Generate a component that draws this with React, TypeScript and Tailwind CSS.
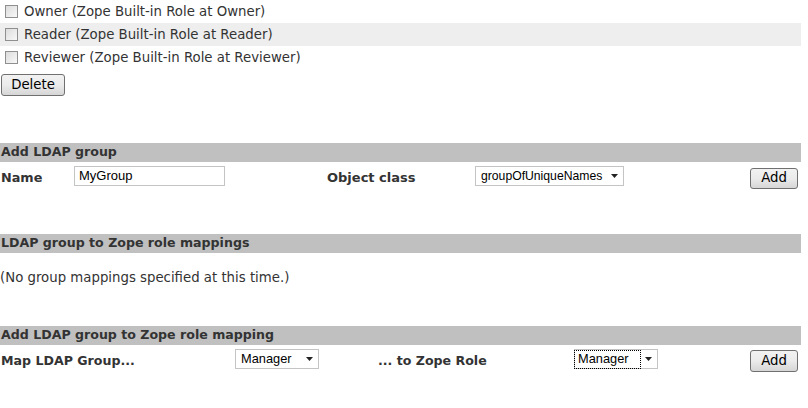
import React from "react";

const verdana = { fontFamily: '"DejaVu Sans", Verdana, sans-serif' };
const arial = { fontFamily: '"Liberation Sans", Arial, sans-serif' };

function Checkbox() {
  return (
    <span className="inline-block w-[13px] h-[13px] border border-[#8f8f8f] bg-gradient-to-br from-[#dcdcdc] to-[#f8f8f8] shrink-0" />
  );
}

function Btn({ label, className = "" }: { label: string; className?: string }) {
  return (
    <div
      className={
        "flex items-center justify-center border border-[#707070] rounded-[3px] bg-gradient-to-b from-[#f2f2f2] via-[#ebebeb] to-[#d6d6d6] text-[13.3px] text-black " +
        className
      }
      style={verdana}
    >
      {label}
    </div>
  );
}

function Select({ value, className = "", focused = false }: { value: string; className?: string; focused?: boolean }) {
  return (
    <div
      className={"flex items-center h-[20px] border border-[#c4c4c4] bg-white text-black " + className}
      style={arial}
    >
      <span
        className={
          "flex-1 min-w-0 whitespace-nowrap overflow-hidden leading-[16px] " +
          (focused ? "outline outline-1 outline-dotted outline-black mr-[5px] pl-[3px] h-[17px]" : "pl-[5px]")
        }
      >
        {value}
      </span>
      <svg width="7" height="4" viewBox="0 0 7 4" className="mr-[5px] shrink-0">
        <path d="M0 0 H7 L3.5 4 Z" fill="#222" />
      </svg>
    </div>
  );
}

function Header({ children }: { children: React.ReactNode }) {
  return (
    <div
      className="h-[19px] bg-[#c0c0c0] flex items-center pl-[1px] font-bold text-[12.6px] text-[#333]"
      style={verdana}
    >
      {children}
    </div>
  );
}

export default function App() {
  const rows = [
    "Owner (Zope Built-in Role at Owner)",
    "Reader (Zope Built-in Role at Reader)",
    "Reviewer (Zope Built-in Role at Reviewer)",
  ];
  return (
    <div className="w-[808px] h-[408px] bg-white overflow-hidden text-[#333]" style={verdana}>
      <div className="w-[801px]">
        <div className="flex flex-col">
          {rows.map((r, i) => (
            <div
              key={r}
              className={"h-[23px] flex items-center pl-[5px] gap-[6px] text-[13.3px] " + (i === 1 ? "bg-[#eeeeee]" : "")}
            >
              <Checkbox />
              <span>{r}</span>
            </div>
          ))}
        </div>
        <div className="pl-[1px] pt-[5px]">
          <Btn label="Delete" className="w-[64px] h-[22px]" />
        </div>

        <div className="mt-[47px]">
          <Header>Add LDAP group</Header>
          <div className="flex items-center h-[28px] text-[13px]">
            <span className="w-[74px] pl-[1px] pt-[4px] font-bold text-[12.8px]">Name</span>
            <div className="w-[151px] h-[20px] border border-[#c4c4c4] bg-white flex items-center pl-[4px] text-[13px] text-black" style={arial}>
              MyGroup
            </div>
            <span className="ml-[102px] w-[148px] pt-[4px] font-bold text-[13px]">Object class</span>
            <Select value="groupOfUniqueNames" className="w-[149px] text-[12.2px]" />
            <div className="flex-1" />
            <Btn label="Add" className="w-[48px] h-[21px] mr-[3px] mt-[4px]" />
          </div>
        </div>

        <div className="mt-[44px]">
          <Header>LDAP group to Zope role mappings</Header>
          <div className="h-[44px] flex items-center pt-[5px] text-[13.3px]">(No group mappings specified at this time.)</div>
        </div>

        <div className="mt-[29px]">
          <Header>Add LDAP group to Zope role mapping</Header>
          <div className="flex items-center h-[28px]">
            <span className="w-[235px] pl-[1px] pt-[5px] font-bold text-[12.6px]">Map LDAP Group...</span>
            <Select value="Manager" className="w-[84px] text-[12.8px]" />
            <span className="ml-[59px] w-[196px] pt-[5px] font-bold text-[12.6px]">... to Zope Role</span>
            <Select value="Manager" className="w-[84px] text-[12.8px]" focused />
            <div className="flex-1" />
            <Btn label="Add" className="w-[48px] h-[22px] mr-[3px] mt-[3px]" />
          </div>
        </div>
      </div>
    </div>
  );
}
